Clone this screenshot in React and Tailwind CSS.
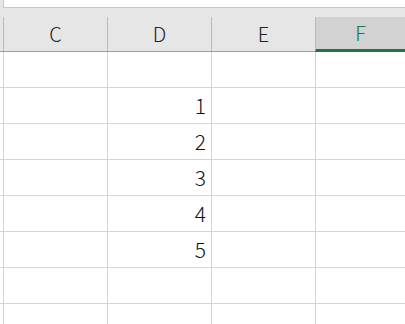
import React from 'react';

const cols = ['C', 'D', 'E', 'F'];
const rows = ['', '1', '2', '3', '4', '5', '', ''];

const font = { fontFamily: '"Noto Sans CJK JP", "Noto Sans", sans-serif' };

export default function App() {
  return (
    <div className="w-[405px] h-[324px] overflow-hidden bg-white" style={font}>
      {/* formula bar edge */}
      <div className="h-[17px] bg-[#e6e6e6]">
        <div className="ml-[3px] h-[8px] bg-white border-l border-b border-[#c6c6c6]" />
      </div>

      {/* column headers */}
      <div className="flex h-[35px] bg-[#e6e6e6] border-b border-[#9e9e9e]">
        <div className="w-[3px] shrink-0" />
        {cols.map((c, i) => {
          const last = i === cols.length - 1;
          return (
            <div
              key={c}
              className={
                last
                  ? 'flex-1 flex items-center justify-center border-l border-[#bababa] bg-[#d2d2d2] text-[#217346] text-[20px] font-light border-b-[3px] border-b-[#217346] -mb-px'
                  : 'w-[104px] shrink-0 flex items-center justify-center border-l border-[#bababa] text-[#222] text-[20px] font-light'
              }
            >
              {c}
            </div>
          );
        })}
      </div>

      {/* grid */}
      {rows.map((v, r) => (
        <div key={r} className="flex h-[36px] border-b border-[#d4d4d4]">
          <div className="w-[3px] shrink-0" />
          <div className="w-[104px] shrink-0 border-l border-[#d4d4d4]" />
          <div className="w-[104px] shrink-0 border-l border-[#d4d4d4] flex items-center justify-end pr-[5px] text-[21px] font-light text-[#111]">
            {v}
          </div>
          <div className="w-[104px] shrink-0 border-l border-[#d4d4d4]" />
          <div className="flex-1 border-l border-[#d4d4d4]" />
        </div>
      ))}
    </div>
  );
}
